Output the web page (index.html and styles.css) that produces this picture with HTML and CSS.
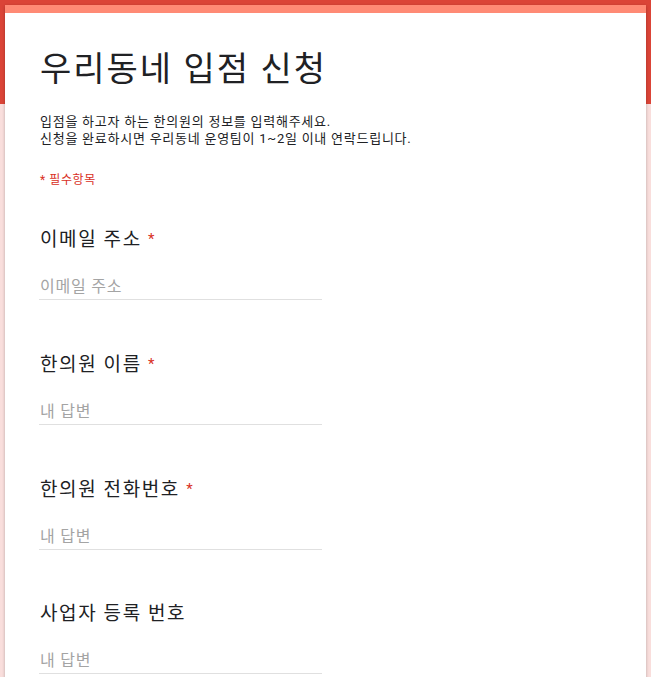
FILE: index.html
```html
<!DOCTYPE html>
<html lang="ko">
<head>
<meta charset="utf-8">
<title>우리동네 입점 신청</title>
<link rel="stylesheet" href="styles.css">
</head>
<body>
<div class="page">
  <div class="card">
    <div class="stripe"></div>
    <div class="header">
      <h1 class="title">우리동네 입점 신청</h1>
      <p class="desc">입점을 하고자 하는 한의원의 정보를 입력해주세요.<br>신청을 완료하시면 우리동네 운영팀이 1~2일 이내 연락드립니다.</p>
      <p class="required-note">* 필수항목</p>
    </div>
    <div class="question">
      <div class="q-title">이메일 주소 <span class="star">*</span></div>
      <div class="field"><span class="placeholder">이메일 주소</span></div>
    </div>
    <div class="question">
      <div class="q-title">한의원 이름 <span class="star">*</span></div>
      <div class="field"><span class="placeholder">내 답변</span></div>
    </div>
    <div class="question">
      <div class="q-title">한의원 전화번호 <span class="star">*</span></div>
      <div class="field"><span class="placeholder">내 답변</span></div>
    </div>
    <div class="question">
      <div class="q-title">사업자 등록 번호</div>
      <div class="field"><span class="placeholder">내 답변</span></div>
    </div>
  </div>
</div>
</body>
</html>
```
FILE: styles.css
```css
html, body {
  margin: 0;
  padding: 0;
}
body {
  font-family: Roboto, "Noto Sans CJK KR", sans-serif;
  color: #202124;
  background: linear-gradient(to bottom, #db4437 0, #db4437 104px, #f9dedc 104px);
  min-height: 677px;
}
.page {
  padding: 5px 5px 0;
}
.card {
  background: #fff;
  box-shadow: 0 1px 3px rgba(0, 0, 0, 0.25);
  padding-bottom: 40px;
}
.stripe {
  height: 8px;
  background: #ff8a75;
}
.header {
  padding: 0 35px;
}
.title {
  margin: 0;
  padding-top: 32px;
  font-size: 34px;
  font-weight: 400;
  line-height: 48px;
  letter-spacing: 2px;
}
.desc {
  margin: 20px 0 0;
  font-size: 13px;
  line-height: 17px;
  letter-spacing: 0.75px;
}
.required-note {
  margin: 23px 0 0;
  font-size: 12px;
  color: #d93025;
  letter-spacing: 0.6px;
}
.question {
  padding: 0 35px;
  margin-top: 38px;
}
.question + .question {
  margin-top: 50px;
}
.q-title {
  font-size: 19px;
  line-height: 28px;
  letter-spacing: 1.6px;
}
.star {
  color: #d93025;
  font-size: 15px;
  vertical-align: 2px;
  letter-spacing: 0;
}
.field {
  width: 282px;
  margin-top: 22px;
  margin-left: -1px;
  padding-left: 1px;
  border-bottom: 1px solid #e0e0e0;
  padding-bottom: 1px;
}
.placeholder {
  font-size: 16px;
  line-height: 22px;
  color: #a4a4a4;
  letter-spacing: 0.8px;
}
```
